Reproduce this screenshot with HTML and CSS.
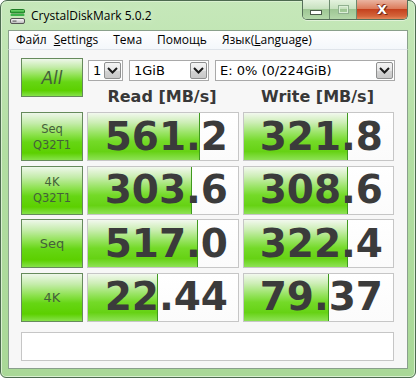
FILE: index.html
```html
<!DOCTYPE html>
<html>
<head>
<meta charset="utf-8">
<link rel="stylesheet" href="styles.css">
</head>
<body>
<div class="window">
  <div class="titlebar">
    <svg class="appicon" width="17" height="17" viewBox="0 0 17 17">
      <defs>
        <linearGradient id="gr" x1="0" y1="0" x2="0" y2="1">
          <stop offset="0" stop-color="#7fe07a"/>
          <stop offset="1" stop-color="#1f9a2a"/>
        </linearGradient>
        <linearGradient id="gy" x1="0" y1="0" x2="0" y2="1">
          <stop offset="0" stop-color="#ffffff"/>
          <stop offset="1" stop-color="#b8b8b8"/>
        </linearGradient>
      </defs>
      <rect x="1.5" y="1.5" width="14" height="3.5" rx="1" fill="url(#gr)" stroke="#1d7a25"/>
      <rect x="1.5" y="6" width="14" height="2" rx="0.8" fill="#3cb34a"/>
      <rect x="1.5" y="10.5" width="14" height="5" rx="1.5" fill="url(#gy)" stroke="#555"/>
      <rect x="3.5" y="12.5" width="4" height="1.2" fill="#666"/>
    </svg>
    <span class="title">CrystalDiskMark 5.0.2</span>
    <div class="controls">
      <div class="ctl min"><span class="minbar"></span></div>
      <div class="ctl max"><span class="maxbox"></span></div>
      <div class="ctl close"><span class="x">X</span></div>
    </div>
  </div>
  <div class="menubar">
    <span class="mi first">Файл</span>
    <span class="mi"><u>S</u>ettings</span>
    <span class="mi">Тема</span>
    <span class="mi">Помощь</span>
    <span class="mi">Язык(<u>L</u>anguage)</span>
  </div>
  <div class="client">
    <div class="top">
      <div class="btn all">All</div>
      <div class="topright">
        <div class="selects">
          <div class="select s1"><span class="val">1</span><span class="arrow"><svg width="11" height="7" viewBox="0 0 11 7"><path d="M1 1 L5.5 5.5 L10 1" fill="none" stroke="#1a1a1a" stroke-width="2"/></svg></span></div>
          <div class="select s2"><span class="val">1GiB</span><span class="arrow"><svg width="11" height="7" viewBox="0 0 11 7"><path d="M1 1 L5.5 5.5 L10 1" fill="none" stroke="#1a1a1a" stroke-width="2"/></svg></span></div>
          <div class="select s3"><span class="val">E: 0% (0/224GiB)</span><span class="arrow"><svg width="11" height="7" viewBox="0 0 11 7"><path d="M1 1 L5.5 5.5 L10 1" fill="none" stroke="#1a1a1a" stroke-width="2"/></svg></span></div>
        </div>
        <div class="headers">
          <div class="hdr">Read [MB/s]</div>
          <div class="hdr">Write [MB/s]</div>
        </div>
      </div>
    </div>
    <div class="rows">
      <div class="btn small">Seq<br>Q32T1</div>
      <div class="cell"><div class="fill" style="width:74.5%"></div><span class="num">561.2</span></div>
      <div class="cell"><div class="fill" style="width:70%"></div><span class="num">321.8</span></div>

      <div class="btn small">4K<br>Q32T1</div>
      <div class="cell"><div class="fill" style="width:69.5%"></div><span class="num">303.6</span></div>
      <div class="cell"><div class="fill" style="width:69.5%"></div><span class="num">308.6</span></div>

      <div class="btn mid">Seq</div>
      <div class="cell"><div class="fill" style="width:73.5%"></div><span class="num">517.0</span></div>
      <div class="cell"><div class="fill" style="width:70%"></div><span class="num">322.4</span></div>

      <div class="btn mid">4K</div>
      <div class="cell"><div class="fill" style="width:46.5%"></div><span class="num">22.44</span></div>
      <div class="cell"><div class="fill" style="width:57%"></div><span class="num">79.37</span></div>
    </div>
    <div class="comment"></div>
  </div>
</div>
</body>
</html>
```
FILE: styles.css
```css
* { box-sizing: border-box; }
html, body { margin: 0; padding: 0; background: #ffffff; }
body { width: 416px; height: 378px; overflow: hidden; }

.window {
  width: 416px;
  height: 378px;
  border: 1px solid #4d6b50;
  border-radius: 7px 7px 6px 6px;
  background: linear-gradient(to bottom, #c6e8ba 0%, #b2dea2 40%, #a9d897 100%);
  padding: 0 7px 8px 7px;
  display: flex;
  flex-direction: column;
  box-shadow: inset 0 0 0 1px #d9f0d0;
}

.titlebar {
  height: 29px;
  display: flex;
  align-items: flex-start;
  position: relative;
}
.appicon { margin: 7px 0 0 1px; flex: none; }
.title {
  font-family: "Open Sans", "Liberation Sans", sans-serif;
  font-size: 12px;
  color: #000;
  margin: 7px 0 0 5px;
  line-height: 16px;
  text-shadow: 0 0 6px #e8f6e0;
}
.controls {
  margin-left: auto;
  margin-top: -1px;
  display: flex;
  height: 20px;
  border: 1px solid #56705a;
  border-top: none;
  border-radius: 0 0 5px 5px;
  overflow: hidden;
  box-shadow: 0 1px 0 #e0f2d8;
}
.ctl {
  height: 19px;
  display: flex;
  align-items: center;
  justify-content: center;
}
.min, .max {
  width: 27px;
  background: linear-gradient(to bottom, #e4f2de 0%, #c8e2c0 45%, #9ec694 50%, #b4d8aa 100%);
  border-right: 1px solid #6c8a6e;
}
.close {
  width: 50px;
  background: linear-gradient(to bottom, #eab4a0 0%, #dc7c5c 45%, #c4421e 50%, #d4643a 85%, #e48a5c 100%);
}
.minbar {
  width: 12px; height: 5px;
  background: #fff;
  border: 1px solid #4a5a4a;
  margin-top: 5px;
}
.maxbox {
  width: 11px; height: 9px;
  border: 1px solid #90b090;
  box-shadow: inset 0 0 0 1px #dcefd8;
}
.x {
  font-family: "DejaVu Sans", sans-serif;
  font-weight: bold;
  font-size: 13px;
  color: #fff;
  text-shadow: 0 0 1px #5a1a0a, 1px 1px 0 #7a2a14, -1px -1px 0 #9a3a20;
  line-height: 13px;
}

.menubar {
  height: 20px;
  background: linear-gradient(to bottom, #ffffff, #f4f7fb);
  border: 1px solid #8aa08c;
  border-bottom: 1px solid #dfe4ea;
  display: flex;
  align-items: center;
  padding-left: 7px;
  font-family: "Open Sans", "Liberation Sans", sans-serif;
  font-size: 12px;
  color: #000;
}
.mi { margin-right: 15px; line-height: 16px; }
.mi.first { margin-right: 7px; }

.client {
  flex: 1;
  background: #f7f7f7;
  border: 1px solid #8aa08c;
  border-top: none;
  padding: 8px 13px 4px 12px;
  display: flex;
  flex-direction: column;
}

.top {
  display: flex;
  align-items: flex-start;
  gap: 4px;
  height: 50px;
}

.btn {
  border: 1px solid #668a5c;
  background: linear-gradient(to bottom, #eef7ea 0%, #c4ecaa 22%, #8ee250 45%, #66d614 62%, #5cd000 85%, #86e24a 100%);
  color: #44603a;
  font-family: "DejaVu Sans", sans-serif;
  display: flex;
  align-items: center;
  justify-content: center;
  text-align: center;
}
.all {
  width: 62px;
  height: 39px;
  font-size: 17px;
  font-style: italic;
  flex: none;
}
.small { font-size: 11.5px; line-height: 16px; }
.mid { font-size: 13px; }

.topright { flex: 1; display: flex; flex-direction: column; }
.selects {
  display: flex;
  margin-top: 2px;
  height: 21px;
  margin-left: 1px;
}
.select {
  height: 21px;
  border: 1px solid #a9a9a9;
  background: #fff;
  display: flex;
  align-items: center;
  justify-content: space-between;
  padding: 0 1px 0 4px;
  font-family: "DejaVu Sans", sans-serif;
  font-size: 13px;
  color: #000;
}
.s1 { width: 35px; margin-right: 6px; }
.s2 { width: 80px; margin-right: 6px; }
.s3 { width: 180px; }
.arrow {
  width: 17px;
  height: 17px;
  border: 1px solid #8e8f8f;
  border-radius: 2px;
  background: linear-gradient(to bottom, #f4f4f4 0%, #e6e6e6 50%, #d4d4d4 52%, #c8c8c8 100%);
  display: flex;
  align-items: center;
  justify-content: center;
  flex: none;
}

.headers {
  display: grid;
  grid-template-columns: 152px 151px;
  column-gap: 4px;
  margin-top: 5px;
  margin-left: -1px;
}
.hdr {
  text-align: center;
  font-family: "DejaVu Sans", sans-serif;
  font-weight: bold;
  font-size: 16px;
  line-height: 22px;
  color: #383838;
}

.rows {
  display: grid;
  grid-template-columns: 62px 152px 151px;
  grid-auto-rows: 49px;
  column-gap: 4px;
  row-gap: 4.67px;
  margin-top: 4px;
}
.cell {
  position: relative;
  background: linear-gradient(to bottom, #ffffff, #fbfbfb);
  border: 1px solid #c6c6c6;
  display: flex;
  align-items: center;
  justify-content: flex-end;
  padding-right: 10px;
  overflow: hidden;
}
.fill {
  position: absolute;
  left: 0; top: 0; bottom: 0;
  background: linear-gradient(to bottom, #f2f8ee 0%, #cdeeb6 20%, #9ae466 42%, #74da28 60%, #66d214 82%, #8ee256 100%);
  border-right: 1px solid #3f9a1e;
}
.num {
  position: relative;
  font-family: "DejaVu Sans", sans-serif;
  font-weight: bold;
  font-size: 39px;
  line-height: 40px;
  color: #3b3b3b;
  letter-spacing: 0;
}

.comment {
  margin-top: 10px;
  height: 29px;
  border: 1px solid #c6c6c6;
  background: #fff;
}
```
